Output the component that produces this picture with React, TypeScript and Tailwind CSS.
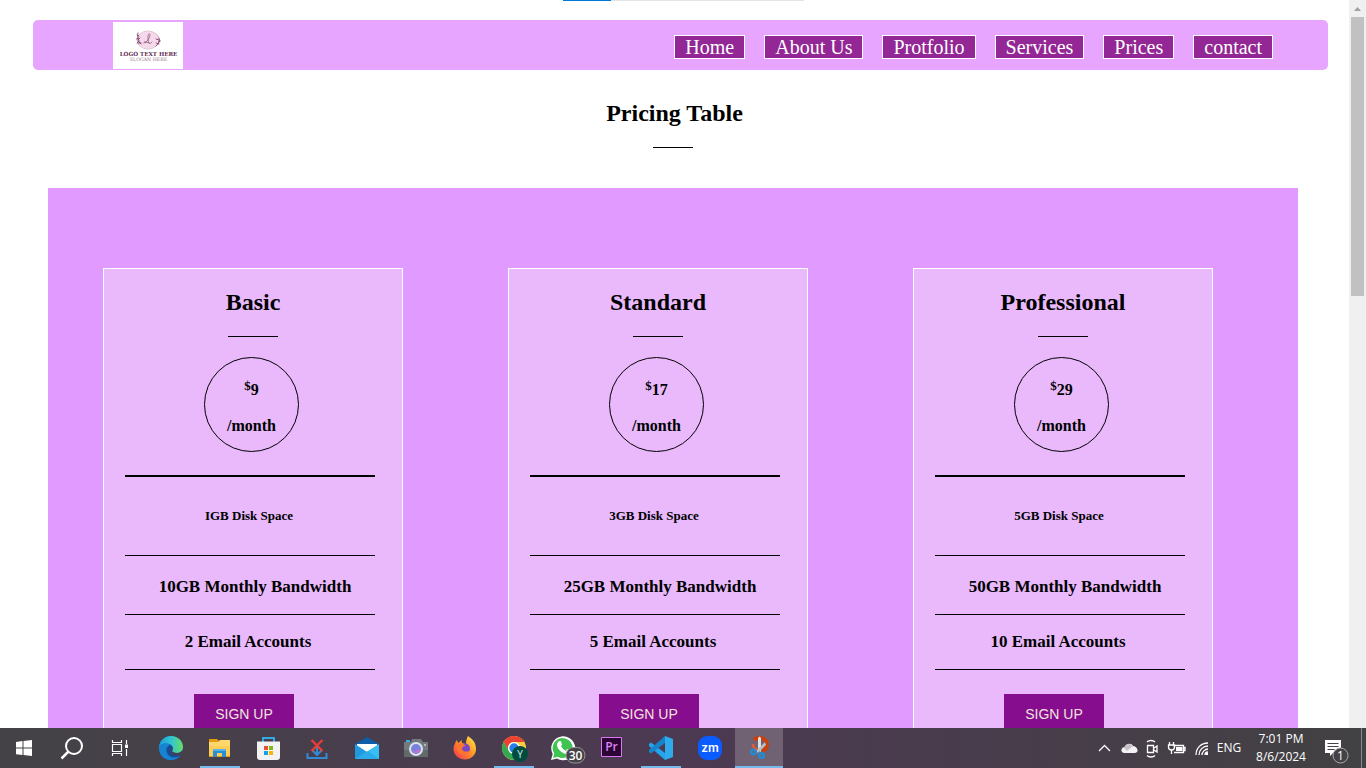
import type { ReactNode } from "react";

const navItems = ["Home", "About Us", "Protfolio", "Services", "Prices", "contact"];

const plans = [
  { name: "Basic", price: 9, disk: "IGB Disk Space", bandwidth: "10GB Monthly Bandwidth", email: "2 Email Accounts" },
  { name: "Standard", price: 17, disk: "3GB Disk Space", bandwidth: "25GB Monthly Bandwidth", email: "5 Email Accounts" },
  { name: "Professional", price: 29, disk: "5GB Disk Space", bandwidth: "50GB Monthly Bandwidth", email: "10 Email Accounts" },
];

function Logo() {
  return (
    <svg viewBox="0 0 70 47" className="h-[47px] w-[70px] bg-white" role="img" aria-label="Logo">
      <ellipse cx="35.500" cy="18" rx="11.500" ry="8.500" fill="#f6d9ea" />
      <ellipse cx="35" cy="18" rx="11" ry="9" fill="none" stroke="#c9a3b9" strokeWidth=".6" />
      <g fill="none" stroke="#70365f" strokeWidth=".8" strokeLinecap="round">
        <path d="M25 11c-1 4 0 8 3 11M24 13l2 1M23.500 17l2-1M24 21l2-2M27 16l-2 2M28 21h-3" />
        <path d="M46 16c1 3 0 6-3 8M43 17l3 1M47.500 19l-2 1M43 21l3 1" />
        <path d="M31 21c3 0 6-6 6-8s-2-1-2 1 0 6 1 7 2 0 3-1M31 20c1-1 3 1 5 1" strokeWidth=".6" />
      </g>
      <text x="35.500" y="34" textAnchor="middle" fontSize="5.600" fontWeight="bold" fill="#642c55" fontFamily="DejaVu Serif, serif">LOGO TEXT HERE</text>
      <text x="35.500" y="38.500" textAnchor="middle" fontSize="4.700" fill="#9a7b92" fontFamily="DejaVu Serif, serif">SLOGAN HERE</text>
    </svg>
  );
}

function PlanCard({ plan }: { plan: (typeof plans)[number] }) {
  return (
    <article className="flex h-[560px] w-[300px] shrink-0 flex-col border border-white bg-[#e9b9fc] pt-[19px] font-bold">
      <h2 className="text-center text-2xl leading-7">{plan.name}</h2>
      <div className="mx-auto mt-5 h-px w-[50px] bg-black" />
      <div className="ml-[100px] mt-5 flex h-[95px] w-[95px] flex-col items-center rounded-full border border-black pt-5 text-base leading-6">
        <p><sup className="top-[-5px] text-[13px] leading-none">$</sup>{plan.price}</p>
        <p className="mt-3">/month</p>
      </div>
      <ul className="ml-[21px] mt-[23px] w-[250px] border-t-2 border-black text-center text-[17px]">
        <li className="flex h-[79px] items-center justify-center border-b border-black pr-0.5 text-[13px]">{plan.disk}</li>
        <li className="flex h-[59px] items-center justify-center border-b border-black pl-2.5 pt-1">{plan.bandwidth}</li>
        <li className="flex h-[55px] items-center justify-center border-b border-black pr-1">{plan.email}</li>
      </ul>
      <button className="ml-[90px] mt-6 h-10 w-[100px] bg-[#860d8e] font-['Liberation_Sans',sans-serif] text-sm font-normal text-[#f3e3dc]">SIGN UP</button>
    </article>
  );
}

function Icon({ children }: { children: ReactNode }) {
  return <svg viewBox="0 0 32 32" className="h-8 w-8" aria-hidden="true">{children}</svg>;
}

const WindowsIcon = (
  <Icon><g fill="#fff"><path d="M8 10l6.500-1v6.500H8zM15.500 9L24 8v7.500h-8.500zM8 16.500h6.500V23L8 22.200zM15.500 16.500H24V24l-8.500-1z" /></g></Icon>
);
const SearchIcon = (
  <Icon><g fill="none" stroke="#fff" strokeWidth="2"><circle cx="18" cy="14" r="8" /><path d="M12.500 19.500L5.500 26.500" strokeWidth="2.500" /></g></Icon>
);
const TaskViewIcon = (
  <Icon><g fill="none" stroke="#fff" strokeWidth="1.200"><path d="M8.500 8v2.500h9V8M8.500 24v-2.500h9V24M8.500 12.500h9v7h-9zM22.500 8v4M22.500 17v7" /><path d="M21 12.500h3V16h-3z" fill="#fff" stroke="none" /></g></Icon>
);
const EdgeIcon = (
  <Icon>
    <defs>
      <linearGradient id="edgeTop"><stop stopColor="#199ddb" /><stop offset=".5" stopColor="#30c5d1" /><stop offset="1" stopColor="#67dd68" /></linearGradient>
      <linearGradient id="edgeLow" x1="0" y1="0" x2="1" y2="1"><stop stopColor="#1989d8" /><stop offset="1" stopColor="#1456a5" /></linearGradient>
    </defs>
    <circle cx="16" cy="16" r="12" fill="url(#edgeLow)" />
    <path d="M4 15C5 8 10 4 16 4c7 0 12 5 12 11 0 4-3 6-7 6-3 0-5-1-4-2 2-2 1-5-2-7-3-1-9-1-11 3z" fill="url(#edgeTop)" />
    <path d="M4 16c1-5 8-6 11-3-4 1-5 6-3 9 3 5 9 4 13 2-5 6-15 5-19-1-1-2-2-5-2-7z" fill="#1683d3" />
    <path d="M15 13c-5 2-4 8 0 11 4 2 8 1 11-2-6 2-11 0-10-4 0-1 2-2 1-4z" fill="#174c91" />
    <path d="M17 15c2 3-1 4 1 5 4 2 9 1 10-3-1 3-1 5-3 6-5 1-10-1-9-5z" fill="#4a3b4e" />
  </Icon>
);
const FolderIcon = (
  <Icon>
    <path d="M5 7h8l2 2h11v16H5z" fill="#e49c0b" /><path d="M5 10h9l2-2h10v16H5z" fill="#ffd76d" />
    <path d="M5 14h21v10H5z" fill="#ffcf55" /><path d="M9 25v-8h13v8h-4v-4h-5v4z" fill="#298ed8" /><path d="M9 17h13v2H9z" fill="#54b3f0" />
  </Icon>
);
const StoreIcon = (
  <Icon>
    <path d="M10 11V6h11v5" fill="none" stroke="#32a9e5" strokeWidth="2" />
    <path d="M4 9.500h23V25c0 2-1 3-3 3H7c-2 0-3-1-3-3z" fill="#f2f2f2" />
    <path d="M11 14h4v4h-4z" fill="#e85032" /><path d="M16 14h4v4h-4z" fill="#80b816" /><path d="M11 19h4v4h-4z" fill="#16a1e8" /><path d="M16 19h4v4h-4z" fill="#f8b600" />
  </Icon>
);
const DownloadIcon = (
  <Icon>
    <path d="M5.500 21v5h19v-5M15 12v11M10.500 18.500L15 23l4.500-4.500" fill="none" stroke="#338bd5" strokeWidth="2" />
    <path d="M9.500 8l11 11M20.500 8l-11 11" stroke="#ed3e35" strokeWidth="2.200" />
  </Icon>
);
const MailIcon = (
  <Icon>
    <path d="M4 12l12-7 12 7v8H4z" fill="#0f5da8" /><path d="M6 12h20v10H6z" fill="#fff" />
    <path d="M4 12l12 8-12 7z" fill="#2199df" /><path d="M28 12v15H4z" fill="#38bdf4" /><path d="M4 27l13-8 11 8z" fill="#2aabea" />
  </Icon>
);
const CameraIcon = (
  <Icon>
    <path d="M6 8h4v3H6z" fill="#34aee5" /><path d="M12 7h9l2 3h5v15H4V10h7z" fill="#737a7e" /><path d="M4 18h24v7H4z" fill="#62696d" />
    <circle cx="16" cy="17" r="7" fill="#d9e4eb" /><circle cx="16" cy="17" r="5" fill="#7882dc" /><path d="M12 19a5 5 0 009-1c-3-2-5 2-9 1z" fill="#be73d1" /><circle cx="25" cy="13" r="1" fill="#ccc" />
  </Icon>
);
const FirefoxIcon = (
  <Icon>
    <defs><linearGradient id="fox" x1="1" y1="0" x2="0" y2="1"><stop stopColor="#fff34f" /><stop offset=".45" stopColor="#ff9725" /><stop offset="1" stopColor="#f52b58" /></linearGradient></defs>
    <path d="M19 4c4 3 8 6 8 13 0 6-5 10.500-11 10.500S4.500 23 4.500 17c0-4 2-6 3-9l2 3 3-3 .5 3 4 1c0-4 1-6 2-8z" fill="url(#fox)" />
    <circle cx="16" cy="16.500" r="5" fill="#7546c7" /><path d="M8 13c3-3 6-2 9 1-3 0-4 1-4 3 1 3 5 3 8 2-3 5-12 4-13-2z" fill="#ff752e" />
  </Icon>
);
const ChromeIcon = (
  <Icon>
    <circle cx="16" cy="16" r="12" fill="#ffcd40" /><path d="M5.600 10A12 12 0 0126.400 10H16a6 6 0 00-5.200 9z" fill="#ea4335" />
    <path d="M5.600 10A12 12 0 0016 28l5-9a6 6 0 01-10 0z" fill="#34a853" /><circle cx="16" cy="16" r="6" fill="#fff" /><circle cx="16" cy="16" r="4.700" fill="#2680e8" />
    <circle cx="22" cy="22" r="8" fill="#004d40" /><text x="22" y="25.500" textAnchor="middle" fontSize="10" fill="#d5efe9" fontFamily="Open Sans, sans-serif">Y</text>
  </Icon>
);
const WhatsAppIcon = (
  <svg viewBox="0 0 40 32" className="ml-2 h-8 w-10 shrink-0" aria-hidden="true">
    <path d="M4 28l1.700-6A12 12 0 1110 26.500z" fill="#fff" /><path d="M6 26l1.200-4.500a10 10 0 113.500 3.300z" fill="#40c451" />
    <path d="M12 9l2 0 1 4-1 1c1 2 3 4 5 5l1-2 4 2c0 3-3 4-5 3-5-1-9-6-9-9 0-2 1-3 2-4z" fill="#fff" />
    <rect x="19" y="15.500" width="19" height="15.500" rx="7.700" fill="#464447" stroke="#99949a" /><text x="28.500" y="27.500" textAnchor="middle" fontSize="12" fontWeight="600" fill="#fff" fontFamily="Open Sans, sans-serif">30</text>
  </svg>
);
const PremiereIcon = (
  <Icon><path d="M5.500 5.500h20v19h-20z" fill="#2b0634" stroke="#dc78ef" /><text x="15.500" y="19" textAnchor="middle" fontSize="12" fontWeight="600" fill="#df80f4" fontFamily="Open Sans, sans-serif">Pr</text></Icon>
);
const CodeIcon = (
  <Icon><path d="M4 12l2-1.500L20 21v7L4 14z" fill="#22a4ef" /><path d="M20 4v7L6 21.500 4 20v-2z" fill="#1683ca" /><path d="M20 4l8 3v18l-8 3z" fill="#2fabed" /></Icon>
);
const ZoomIcon = (
  <Icon><rect x="4" y="4" width="24" height="24" rx="9" fill="#0b5cff" /><text x="16" y="20" textAnchor="middle" fontSize="12" fontWeight="600" fill="#fff" fontFamily="Inter, sans-serif">zm</text></Icon>
);
const SnipIcon = (
  <Icon>
    <path d="M11 8c4-4 13-2 13 5 0 3-2 5-5 6" fill="none" stroke="#c8400f" strokeWidth="4" /><path d="M10 12c0 3 2 5 5 6" fill="none" stroke="#e45b31" strokeWidth="2.500" />
    <path d="M15 6l1.500-1.500L18 6v14l-3-2z" fill="#dce1e3" /><path d="M22 10l1 3-8 8-2-2z" fill="#b7bec1" /><g fill="none" stroke="#238bd0" strokeWidth="2.400"><circle cx="10.500" cy="20" r="2.300" /><circle cx="18.500" cy="23.500" r="2.300" /></g>
  </Icon>
);

const apps = [
  { name: "Edge", icon: EdgeIcon },
  { name: "File Explorer", icon: FolderIcon, running: true },
  { name: "Store", icon: StoreIcon },
  { name: "Downloader", icon: DownloadIcon },
  { name: "Mail", icon: MailIcon },
  { name: "Camera", icon: CameraIcon },
  { name: "Firefox", icon: FirefoxIcon },
  { name: "Chrome", icon: ChromeIcon, running: true },
  { name: "WhatsApp", icon: WhatsAppIcon },
  { name: "Premiere Pro", icon: PremiereIcon },
  { name: "Code", icon: CodeIcon, running: true },
  { name: "Zoom", icon: ZoomIcon },
  { name: "Snipping Tool", icon: SnipIcon, active: true },
];

function TrayIcons() {
  return (
    <svg viewBox="0 0 112 24" className="h-6 w-28" aria-hidden="true">
      <g fill="none" stroke="#fff" strokeWidth="1.300">
        <path d="M2 15l5.500-5.500L13 15" />
        <path d="M50.500 9.500h6v7h-6zM57 12l3-2v6l-3-2M50 6c2-2 6-2 8 0M50 19.500c2 2 6 2 8 0" />
        <path d="M76 9.500h10.500v7H77M86.500 11.500h1.500v3h-1.500M72.500 6v3M76.500 6v3M71.500 9h6v2c0 4-6 4-6 0zM74.500 14v4" />
        <path d="M99 19c0-7 5-12 12-12M102 19c0-5 4-9 9-9M105 19c0-3 3-6 6-6M108 19c0-2 1-3 3-3" />
      </g>
      <path d="M79 11h6.500v4H79zM109 17h2v2h-2z" fill="#fff" />
      <path d="M27 17c-4-1-3-6 1-6 1-4 7-4 8-1 4 0 7 6 2 7z" fill="#f4f2f4" /><path d="M27 12c1-5 7-5 9-2l-6 5z" fill="#c7c2c8" />
    </svg>
  );
}

function Taskbar() {
  return (
    <footer className="flex h-10 shrink-0 justify-between bg-linear-to-r from-[#444246] via-[#4c3952] to-[#424143] font-['Open_Sans',sans-serif] text-white">
      <div className="flex">
        <button aria-label="Start" className="flex w-12 items-center justify-center">{WindowsIcon}</button>
        <button aria-label="Search" className="flex w-12 items-center justify-center">{SearchIcon}</button>
        <button aria-label="Task view" className="flex w-12 items-center justify-center">{TaskViewIcon}</button>
        <div className="ml-[3px] flex gap-px">
          {apps.map((app) => (
            <button key={app.name} aria-label={app.name} className={`relative flex w-12 items-center justify-center ${app.active ? "bg-[#706273]" : ""}`}>
              {app.icon}
              {app.running && <span className="absolute inset-x-1 bottom-0 h-0.5 bg-[#76b9ed]" />}
              {app.active && <span className="absolute inset-x-0 bottom-0 h-0.5 bg-[#76b9ed]" />}
            </button>
          ))}
        </div>
      </div>
      <div className="flex items-center text-xs">
        <TrayIcons />
        <span className="ml-1 w-8 text-center">ENG</span>
        <time className="ml-2 w-14 text-center leading-[18px]"><span className="block whitespace-nowrap">7:01 PM</span><span className="block whitespace-nowrap">8/6/2024</span></time>
        <button aria-label="Notifications" className="ml-3.5 mr-2.5 h-10 w-7">
          <svg viewBox="0 0 28 40" className="h-10 w-7">
            <path d="M2 12h16v13h-8l-3 3v-3H2z" fill="#fff" /><path d="M4.500 15.500h11M4.500 18.500h11M4.500 21.500h7" stroke="#484048" />
            <circle cx="17.500" cy="27.500" r="7.500" fill="#444246" stroke="#aaa" /><text x="17.500" y="32" textAnchor="middle" fontSize="12" fill="#fff">1</text>
          </svg>
        </button>
        <div className="mr-1 h-full w-px bg-[#8b888c]" />
      </div>
    </footer>
  );
}

export default function App() {
  return (
    <div className="relative flex h-screen flex-col overflow-hidden bg-white font-['Liberation_Serif',serif] text-black">
      <div className="absolute left-[563px] top-0 h-px w-[241px] bg-[#e5e5e5]"><div className="h-px w-12 bg-[#0078d7]" /></div>
      <div className="flex min-h-0 flex-1">
        <div className="min-w-0 flex-1 overflow-hidden pt-5">
          <header className="ml-[33px] mr-[21px] flex h-[50px] items-center justify-between rounded-[5px] bg-[#e7a5ff] pl-20 pr-[55px]">
            <Logo />
            <nav className="flex gap-[19px] pt-1">
              {navItems.map((item) => (
                <a key={item} href="#" className="border border-white bg-[#922795] px-2.5 text-xl leading-[22px] text-white">{item}</a>
              ))}
            </nav>
          </header>
          <main>
            <h1 className="mt-[29px] text-center text-2xl font-bold leading-7">Pricing Table</h1>
            <div className="mt-5 flex justify-center pr-1"><div className="h-px w-10 bg-black" /></div>
            <section className="ml-12 mr-[51px] mt-10 flex justify-between bg-[#e19aff] pb-20 pl-[55px] pr-[85px] pt-20">
              {plans.map((plan) => <PlanCard key={plan.name} plan={plan} />)}
            </section>
          </main>
        </div>
        <div className="w-[17px] bg-[#f0f0f0] px-0.5" aria-hidden="true">
          <svg viewBox="0 0 13 17" className="h-[17px] w-[13px]"><path d="M3 11l3.500-4 3.500 4z" fill="#a0a0a0" /></svg>
          <div className="h-[279px] bg-[#c1c1c1]" />
        </div>
      </div>
      <Taskbar />
    </div>
  );
}
